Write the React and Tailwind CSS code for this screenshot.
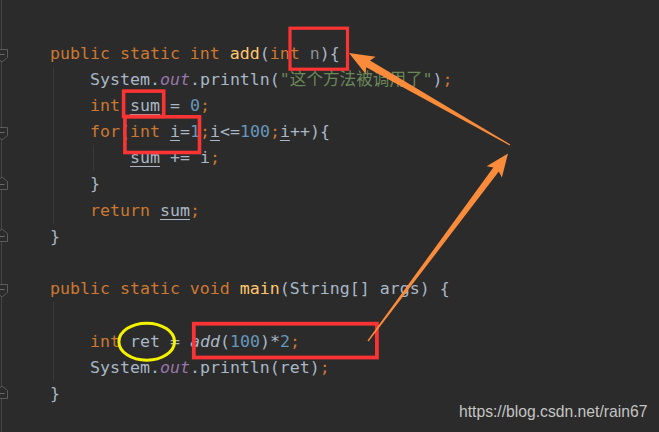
import React from 'react';

const K = 'text-[#cc7832]';
const D = 'text-[#a9b7c6]';
const N = 'text-[#6897bb]';
const S = 'text-[#6a8759]';
const F = 'text-[#ffc66d]';
const U = 'text-[#a9b7c6] underline underline-offset-[3px] decoration-1';
const O = 'text-[#9876aa] italic';

// each line: [indent level, tokens, fold marker]
const lines = [
  { fold: 'down', tokens: [['public static int ', K], ['add', F], ['(', D], ['int ', K], ['n', 'text-[#8a8f96]'], ['){', D]] },
  { body: 1, tokens: [['System.', D], ['out', O], ['.println(', D], ['"这个方法被调用了"', S], [')', D], [';', K]] },
  { body: 1, tokens: [['int ', K], ['sum', U], [' = ', D], ['0', N], [';', K]] },
  { body: 1, fold: 'down', tokens: [['for', K], ['(', D], ['int ', K], ['i', U], ['=', D], ['1', N], [';', K], ['i', U], ['<=', D], ['100', N], [';', K], ['i', U], ['++){', D]] },
  { body: 2, tokens: [['sum', U], [' += i', D], [';', K]] },
  { body: 1, fold: 'up', tokens: [['}', D]] },
  { body: 1, tokens: [['return ', K], ['sum', U], [';', K]] },
  { fold: 'up', tokens: [['}', D]] },
  { tokens: [] },
  { fold: 'down', tokens: [['public static void ', K], ['main', F], ['(String[] args) {', D]] },
  { body: 1, tokens: [] },
  { body: 1, tokens: [['int ', K], ['ret', D], [' = ', D], ['add', 'text-[#a9b7c6] italic'], ['(', D], ['100', N], [')*', D], ['2', N], [';', K]] },
  { body: 1, tokens: [['System.', D], ['out', O], ['.println(ret)', D], [';', K]] },
  { fold: 'up', tokens: [['}', D]] },
];

function FoldMarker({ dir }) {
  return (
    <svg width="12" height="26" viewBox="0 0 12 26" className="-ml-[6px] shrink-0">
      {dir === 'down' ? (
        <>
          <path d="M0.5 8.5 H11.5 V16.5 L6 21 L0.5 16.5 Z" fill="#2b2b2b" stroke="#5b5b5b" />
          <path d="M3.5 13.5 H8.5" stroke="#6a6a6a" />
        </>
      ) : (
        <>
          <path d="M0.5 17.5 H11.5 V9.5 L6 5 L0.5 9.5 Z" fill="#2b2b2b" stroke="#5b5b5b" />
          <path d="M3.5 12.5 H8.5" stroke="#6a6a6a" />
        </>
      )}
    </svg>
  );
}

function Tokens({ tokens }) {
  return tokens.map(([t, c], i) => (
    <span key={i} className={c}>{t}</span>
  ));
}

function CodeLine({ line }) {
  const inner = <Tokens tokens={line.tokens} />;
  if (line.body === 2) {
    return (
      <div className="h-[26.2px] flex">
        <div className="ml-[3px] border-l border-[#3a3a3a] pl-[36px] flex">
          <div className="ml-[3px] border-l border-[#3a3a3a] pl-[36px] whitespace-pre">{inner}</div>
        </div>
      </div>
    );
  }
  if (line.body === 1) {
    return (
      <div className="h-[26.2px] flex">
        <div className="ml-[3px] border-l border-[#3a3a3a] pl-[36px] whitespace-pre">{inner}</div>
      </div>
    );
  }
  return <div className="h-[26.2px] whitespace-pre">{inner}</div>;
}

function Arrow({ tail, tip, head = 22, barb = 10, w0 = 0.6, w1 = 3.8 }) {
  const dx = tip[0] - tail[0];
  const dy = tip[1] - tail[1];
  const len = Math.hypot(dx, dy);
  const ux = dx / len, uy = dy / len;
  const nx = -uy, ny = ux;
  const bx = tip[0] - ux * head, by = tip[1] - uy * head;
  const bbx = tip[0] - ux * (head + 3), bby = tip[1] - uy * (head + 3);
  const p = (x, y) => `${x.toFixed(1)},${y.toFixed(1)}`;
  const pts = [
    p(tail[0] + nx * w0, tail[1] + ny * w0),
    p(bx + nx * w1, by + ny * w1),
    p(bbx + nx * barb, bby + ny * barb),
    p(tip[0], tip[1]),
    p(bbx - nx * barb, bby - ny * barb),
    p(bx - nx * w1, by - ny * w1),
    p(tail[0] - nx * w0, tail[1] - ny * w0),
  ].join(' ');
  return <polygon points={pts} fill="#f98b3a" />;
}

export default function App() {
  return (
    <div className="relative w-[659px] h-[432px] overflow-hidden bg-[#2b2b2b]">
      <div className="flex h-full">
        <div className="ml-[1px] w-[49px] border-l border-[#464646] pt-[40.5px] flex flex-col">
          {lines.map((l, i) => (
            <div key={i} className="h-[26.2px] flex items-center">
              {l.fold && <FoldMarker dir={l.fold} />}
            </div>
          ))}
        </div>
        <div className="flex-1 pt-[40.5px] flex flex-col text-[16.6px] leading-[26.2px] font-['DejaVu_Sans_Mono','Noto_Sans_CJK_SC',monospace]">
          {lines.map((l, i) => (
            <CodeLine key={i} line={l} />
          ))}
        </div>
      </div>

      <svg className="absolute inset-0 pointer-events-none" width="659" height="432" viewBox="0 0 659 432">
        <g fill="none" stroke="#fa3434">
          <rect x="290" y="28.2" width="57.5" height="41" strokeWidth="3.2" />
          <rect x="123.6" y="91.1" width="40.1" height="25.3" strokeWidth="3.6" />
          <rect x="124.9" y="116.8" width="74.6" height="35.7" strokeWidth="3.6" />
          <rect x="193.8" y="323.7" width="183.1" height="33.8" strokeWidth="3.8" />
        </g>
        <ellipse cx="146.7" cy="341.7" rx="27.8" ry="18.5" fill="none" stroke="#f5f200" strokeWidth="3" />
        <Arrow tail={[510, 145]} tip={[349, 53]} />
        <Arrow tail={[368, 341]} tip={[508, 153.5]} head={20} barb={9.5} w1={3.4} />
      </svg>

      <div className="absolute left-[459px] top-[400px] text-[15.7px] text-[#c4c4c4] font-['Liberation_Sans',Arial,sans-serif] whitespace-nowrap">
        https://blog.csdn.net/rain67
      </div>
    </div>
  );
}
